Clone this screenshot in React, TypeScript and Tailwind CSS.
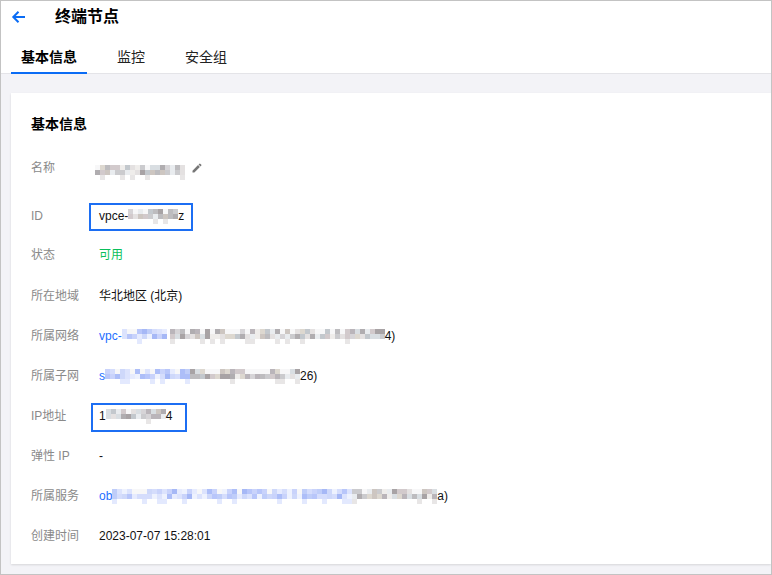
import React from "react";

const FONT = {
  fontFamily: '"Liberation Sans", "Noto Sans CJK SC", Arial, sans-serif',
};

const GRAY = [
  "#e4e1e1", "#d6d4d7", "#cbcbce", "#bdbcbf", "#b0adb0", "#ddd8d0", "#d2cacc",
  "#e9ecef", "#c3c8cd", "#a8a3a5", "#efedeb", "#d9dee2", "#bab5ba", "#cdc6c1",
];
const BLUE = [
  "#c9d3fb", "#b8c6fa", "#dce3fd", "#adbef8", "#e6ebfe", "#ced8fa", "#bfcdf9",
  "#eef2fe", "#a6b8f6", "#d5ddfc",
];

// Pixelated block standing in for redacted text
function Mosaic({ cols, tone, seed }: { cols: number; tone: "gray" | "blue"; seed: number }) {
  const palette = tone === "gray" ? GRAY : BLUE;
  let s = seed * 9301 + 49297;
  const rnd = () => {
    s = (s * 9301 + 49297) % 233280;
    return s / 233280;
  };
  const rows = [0, 1, 2].map((r) =>
    Array.from({ length: cols }, () => {
      const v = rnd();
      if (r === 0 && v < 0.25) return "#f7f7f8";
      if (r === 2 && v < 0.8) return "#ffffff";
      if (r === 2) return tone === "gray" ? "#e8e6e6" : "#e3e9fe";
      return palette[Math.floor(rnd() * palette.length)];
    })
  );
  return (
    <span className="inline-flex flex-col">
      {rows.map((row, ri) => (
        <span key={ri} className="flex">
          {row.map((c, ci) => (
            <span key={ci} className="block h-[5px] w-[5px]" style={{ background: c }} />
          ))}
        </span>
      ))}
    </span>
  );
}

function Row({
  label,
  mt,
  children,
}: {
  label: string;
  mt: string;
  children: React.ReactNode;
}) {
  return (
    <div className={`flex h-[20px] items-center text-[12px] leading-[20px] ${mt}`}>
      <div className="w-[68px] shrink-0 text-[#8a8a8a]">{label}</div>
      <div className="relative flex items-center text-[#111]">{children}</div>
    </div>
  );
}

export default function App() {
  return (
    <div
      className="flex h-[575px] w-[772px] flex-col overflow-hidden border border-[#c3c3c3] bg-white"
      style={FONT}
    >
      {/* page header */}
      <div className="flex h-[32px] items-center pl-[10px]">
        <svg width="16" height="16" viewBox="0 0 16 16" fill="none" className="text-[#0a6cf5]">
          <path d="M14 8H2.5M7.5 2.8L2.3 8l5.2 5.2" stroke="currentColor" strokeWidth="2" />
        </svg>
        <span className="ml-[28px] text-[16px] font-bold text-black">终端节点</span>
      </div>

      {/* tabs */}
      <div className="flex h-[41px] gap-[20px] border-b border-[#e4e4e8] pl-[10px]">
        {["基本信息", "监控", "安全组"].map((t, i) => (
          <div
            key={t}
            className={`relative flex items-center px-[10px] pt-[9px] text-[14px] ${
              i === 0 ? "font-bold text-black" : "text-[#222]"
            }`}
          >
            {t}
            {i === 0 && (
              <span className="absolute -bottom-px left-0 right-0 h-[2px] bg-[#0a6cf5]" />
            )}
          </div>
        ))}
      </div>

      {/* content */}
      <div className="flex-1 bg-[#f3f3f7] pl-[10px] pt-[19px]">
        <div className="h-[471px] bg-white px-[20px] pb-[19px] pt-[20px] shadow-[0_1px_2px_rgba(0,0,0,0.12)]">
          <div className="h-[22px] text-[14px] font-bold leading-[22px] text-black">基本信息</div>

          <Row label="名称" mt="mt-[23px]">
            <span className="-ml-[4px]">
              <Mosaic cols={18} tone="gray" seed={3} />
            </span>
            <svg width="12" height="12" viewBox="0 0 24 24" className="ml-[6px]" fill="#777">
              <path d="M3 17.25V21h3.75L17.81 9.94l-3.75-3.75L3 17.25zM20.71 7.04a1 1 0 000-1.41l-2.34-2.34a1 1 0 00-1.41 0l-1.83 1.83 3.75 3.75 1.83-1.83z" />
            </svg>
          </Row>

          <Row label="ID" mt="mt-[28px]">
            <span>vpce-</span>
            <Mosaic cols={10} tone="gray" seed={7} />
            <span>z</span>
            <span className="absolute left-[-10px] top-[-3px] h-[28px] w-[104px] border-2 border-[#1c6ef3]" />
          </Row>

          <Row label="状态" mt="mt-[19px]">
            <span className="text-[#0abf5b]">可用</span>
          </Row>

          <Row label="所在地域" mt="mt-[21px]">
            <span>华北地区 (北京)</span>
          </Row>

          <Row label="所属网络" mt="mt-[20px]">
            <span className="text-[#1f6fff]">vpc-</span>
            <Mosaic cols={9} tone="blue" seed={11} />
            <span className="w-[3px]" />
            <Mosaic cols={43} tone="gray" seed={13} />
            <span>4)</span>
          </Row>

          <Row label="所属子网" mt="mt-[20px]">
            <span className="text-[#1f6fff]">s</span>
            <Mosaic cols={17} tone="blue" seed={17} />
            <Mosaic cols={22} tone="gray" seed={19} />
            <span>26)</span>
          </Row>

          <Row label="IP地址" mt="mt-[20px]">
            <span>1</span>
            <Mosaic cols={12} tone="gray" seed={23} />
            <span>4</span>
            <span className="absolute left-[-8px] top-[-3px] h-[29px] w-[96px] border-2 border-[#1c6ef3]" />
          </Row>

          <Row label="弹性 IP" mt="mt-[20px]">
            <span>-</span>
          </Row>

          <Row label="所属服务" mt="mt-[20px]">
            <span className="text-[#1f6fff]">ob</span>
            <Mosaic cols={48} tone="blue" seed={29} />
            <Mosaic cols={17} tone="gray" seed={31} />
            <span>a)</span>
          </Row>

          <Row label="创建时间" mt="mt-[20px]">
            <span>2023-07-07 15:28:01</span>
          </Row>
        </div>
      </div>
    </div>
  );
}
